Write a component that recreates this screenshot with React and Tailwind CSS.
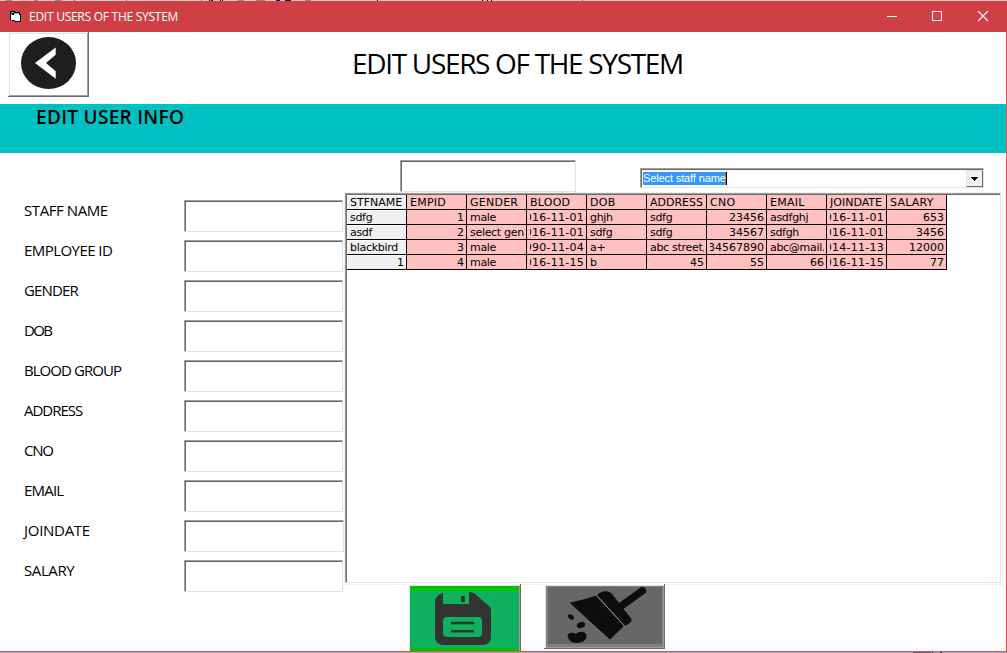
import React from "react";

const SUNKEN =
  "border border-t-[#a0a0a0] border-l-[#a0a0a0] border-r-[#e3e3e3] border-b-[#e3e3e3]";
const SUNKEN_INNER =
  "border-t border-l border-[#696969] bg-white";

const fields = [
  { label: "STAFF NAME", track: "tracking-[-0.42px]" },
  { label: "EMPLOYEE ID", track: "tracking-[-0.55px]" },
  { label: "GENDER", track: "tracking-[-0.85px]" },
  { label: "DOB", track: "tracking-[-1.7px]" },
  { label: "BLOOD GROUP", track: "tracking-[-0.95px]" },
  { label: "ADDRESS", track: "tracking-[-1px]" },
  { label: "CNO", track: "tracking-[-1.3px]" },
  { label: "EMAIL", track: "tracking-[-0.8px]" },
  { label: "JOINDATE", track: "tracking-[-0.28px]", wide: true },
  { label: "SALARY", track: "tracking-[-0.4px]" },
];

const headers = ["STFNAME", "EMPID", "GENDER", "BLOOD", "DOB", "ADDRESS", "CNO", "EMAIL", "JOINDATE", "SALARY"];

const rows = [
  ["sdfg", "1", "male", "2016-11-01", "ghjh", "sdfg", "23456", "asdfghj", "2016-11-01", "653"],
  ["asdf", "2", "select gender", "2016-11-01", "sdfg", "sdfg", "34567", "sdfgh", "2016-11-01", "3456"],
  ["blackbird", "3", "male", "1990-11-04", "a+", "abc street,", "1234567890", "abc@mail.com", "2014-11-13", "12000"],
  ["1", "4", "male", "2016-11-15", "b", "45", "55", "66", "2016-11-15", "77"],
];

const isNumeric = (v) => /^[\d-]+$/.test(v);

const trackFor = (v) => {
  if (/^\d+-/.test(v)) return "tracking-[0.25px]";
  if (/^\d+$/.test(v)) return "tracking-[0px]";
  if (/^[A-Z]+$/.test(v)) return v.length > 6 ? "tracking-[0px]" : "tracking-[0.25px]";
  return "tracking-[-0.3px]";
};

/* Slivers of the window behind: [gap before, width, colour] */
const topSlivers = [
  [6, 6, "#8d8888"], [22, 4, "#8d8888"], [17, 7, "#8d8888"], [12, 1, "#6f6b6b"],
  [51, 1, "#6f6b6b"], [74, 1, "#6f6b6b"], [7, 1, "#000"], [1, 2, "#000"],
  [7, 1, "#000"], [1, 1, "#000"], [15, 6, "#8d8888"], [12, 9, "#8d8888"],
  [11, 4, "#0000c8"], [5, 6, "#300"], [14, 6, "#8d8888"], [66, 1, "#000"],
  [104, 1, "#000"], [4, 1, "#000"], [3, 1, "#000"], [90, 1, "#6f6b6b"],
];
const bottomSlivers = [[913, 18, "#66666a"], [1, 1, "#333"], [7, 2, "#333"]];

function Slivers({ items }) {
  return items.map(([gap, width, color], i) => (
    <span key={i} className="h-px shrink-0" style={{ marginLeft: gap, width, background: color }} />
  ));
}

function FormIcon() {
  return (
    <svg width="13" height="12" viewBox="0 0 13 12" shapeRendering="crispEdges">
      <path d="M0 0h5v1h5v2h1v8H5v-1H2V9H0z" fill="#000" />
      <path d="M1 3h8v1h1v6H5V9H1z" fill="#fff" />
      <path d="M1 1h3v1H1zM4 2h5v1H4z" fill="#19d3dd" />
      <path d="M2 3h2v1H2z" fill="#000" />
      <path d="M11 6h1v1h1v1h-1v1h-1z" fill="#7d6f70" />
    </svg>
  );
}

function TitleBar() {
  return (
    <div className="flex h-[31px] shrink-0 items-center bg-[#d13f46] text-white">
      <div className="ml-[10px]"><FormIcon /></div>
      <span className="ml-[6px] w-[160px] whitespace-nowrap font-['Open_Sans',sans-serif] text-[12px] leading-4 tracking-[-0.26px]">
        EDIT USERS OF THE SYSTEM
      </span>
      <svg className="ml-auto mr-[18px]" width="102" height="11" viewBox="0 0 102 11" fill="none" stroke="#fff">
        <path d="M0 5.5h10" />
        <path d="M45.5 .5h9v9h-9z" />
        <path d="M91 0l10 10M101 0L91 10" strokeWidth="1.1" />
      </svg>
    </div>
  );
}

function Header() {
  return (
    <div className="flex h-[72px] shrink-0 items-start bg-white">
      <button className="ml-2 h-[65px] w-[81px] border-r border-b border-[#696969] pl-px pt-px">
        <span className="flex h-full w-full items-start border border-t-[#e3e3e3] border-l-[#e3e3e3] border-r-[#a0a0a0] border-b-[#a0a0a0] pl-[11px] pt-[3px]">
          <svg width="55" height="52" viewBox="0 0 55 52">
            <ellipse cx="27.5" cy="26" rx="27.5" ry="26" fill="#1e1e1c" />
            <path d="M34.700 10.500v7.200L25 26l9.700 8.200v7.600L14 26z" fill="#fff" />
          </svg>
        </span>
      </button>
      <h1 className="ml-[263px] mt-[12px] whitespace-nowrap font-['Open_Sans',sans-serif] text-[28px] leading-[38px] tracking-[-1.32px] text-black">
        EDIT USERS OF THE SYSTEM
      </h1>
    </div>
  );
}

function StaffForm() {
  return (
    <form className="flex w-[344px] shrink-0 flex-col pt-[47px]">
      {fields.map((f) => (
        <div key={f.label} className="flex h-10 items-start">
          <label className={`w-[184px] pl-6 font-['Open_Sans',sans-serif] text-[15px] leading-5 text-black ${f.track}`}>
            {f.label}
          </label>
          <div className={`h-8 ${f.wide ? "w-[160px]" : "w-[159px]"} ${SUNKEN}`}>
            <div className={`h-full w-full ${SUNKEN_INNER}`} />
          </div>
        </div>
      ))}
    </form>
  );
}

function Cell({ value, grey, right }) {
  return (
    <div className={`h-[15px] w-[60px] border-r border-b border-black ${grey ? "bg-[#f0f0f0]" : "bg-[#ffc0c0]"}`}>
      <div className={`h-full w-full pr-[2px] ${grey ? "border-t border-l border-white pl-[2px]" : "pl-[3px]"}`}>
        <div className={`flex h-full overflow-hidden ${right ? "justify-end" : ""}`}>
          <span className={`shrink-0 whitespace-nowrap ${grey ? "leading-[13px]" : "leading-[15px]"} ${trackFor(value)}`}>
            {value}
          </span>
        </div>
      </div>
    </div>
  );
}

function StaffGrid() {
  return (
    <div className="h-[393px] w-[659px] border border-[#f0f0f0]">
      <div className={`h-[390px] w-[656px] ${SUNKEN}`}>
        <div className={`h-full w-full ${SUNKEN_INNER} font-['DejaVu_Sans',sans-serif] text-[11px] text-black`}>
          <div className="flex">
            {headers.map((h, i) => (
              <Cell key={h} value={h} grey={i === 0} />
            ))}
          </div>
          {rows.map((r, n) => (
            <div className="flex" key={n}>
              {r.map((v, i) => (
                <Cell key={i} value={v} grey={i === 0} right={isNumeric(v)} />
              ))}
            </div>
          ))}
        </div>
      </div>
    </div>
  );
}

function SearchRow() {
  return (
    <div className="flex h-[39px] items-start">
      <div className={`ml-14 mt-[7px] h-8 w-44 ${SUNKEN}`}>
        <div className={`h-full w-full ${SUNKEN_INNER}`} />
      </div>
      <div className={`ml-16 mt-[15px] h-5 w-[344px] ${SUNKEN}`}>
        <div className={`flex h-full w-full items-center pl-px ${SUNKEN_INNER}`}>
          <span className="h-[13px] w-[83px] whitespace-nowrap border-r border-[#cc6600] bg-[#3399ff] font-['Liberation_Sans',sans-serif] text-[11px] leading-[13px] tracking-[-0.12px] text-white">
            Select staff name
          </span>
          <span className="h-[13px] w-px bg-black" />
          <span className="ml-auto flex h-[17px] w-[17px] items-center justify-center border border-t-[#e3e3e3] border-l-[#e3e3e3] border-r-[#696969] border-b-[#696969] bg-[#f0f0f0]">
            <svg width="7" height="4" viewBox="0 0 7 4" shapeRendering="crispEdges">
              <path d="M0 0h7v1H6v1H5v1H4v1H3V3H2V2H1V1H0z" fill="#000" />
            </svg>
          </span>
        </div>
      </div>
    </div>
  );
}

function Actions() {
  return (
    <div className="-mt-px flex h-[67px] items-start">
      <button className="ml-[65px] h-[67px] w-[112px] border-r border-[#696969] bg-white pt-px">
        <span className="flex h-full w-full flex-col border-t border-l border-r border-t-[#e3e3e3] border-l-[#e3e3e3] border-r-[#a0a0a0] bg-[#00c400] pb-[3px] pt-[5px]">
          <svg width="109" height="57" viewBox="0 0 109 57">
            <rect width="109" height="57" fill="#10b15e" />
            <path d="M33 2c-4 1-8 4-8 9v35c0 4 3 8 8 8h40c4 0 8-3 8-8V19c0-2-1-3-2-4L65 3c-1-1-3-2-5-2h-1v12H33z" fill="#333" />
            <rect x="51" y="5" width="4" height="6" fill="#333" />
            <rect x="33" y="26" width="39" height="20" rx="4" fill="#10b15e" />
            <path d="M41 32h23M41 40.200h23" stroke="#333" strokeWidth="2.6" />
          </svg>
        </span>
      </button>
      <button className="ml-[23px] h-[65px] w-[121px] border-r border-b border-[#696969] bg-white pl-px pt-px">
        <span className="block h-full w-full border border-t-[#e3e3e3] border-l-[#e3e3e3] border-r-[#a0a0a0] border-b-[#a0a0a0] bg-[#808080] pl-[2px] pt-px">
          <svg width="114" height="57" viewBox="0 0 114 57">
            <rect width="114" height="57" fill="#676767" />
            <path d="M22.500 16Q37 13 48 9L75.500 39 62 52Q42 34 22.500 16Z" fill="#0d0d0d" stroke="#0d0d0d" strokeWidth="1" strokeLinejoin="round" />
            <path d="M49 8c5-5 12-5 16 0l6 8L92 1c3-3 8 1 5.500 5l-22 16 6.500 8c3 4 2 5-5 9z" fill="#0d0d0d" />
            <path d="M48.500 8.500L76.500 39" stroke="#8a8a8a" strokeWidth="1" />
            <ellipse cx="23" cy="30" rx="3.300" ry="2.300" transform="rotate(35 23 30)" fill="#0d0d0d" />
            <ellipse cx="33" cy="38" rx="4.300" ry="3" transform="rotate(-20 33 38)" fill="#0d0d0d" />
            <path d="M20 47c3-2 6-1 8 0 3-3 9-3 10.500 1 1 5-5 8-10 8-6 0-10-5-8.500-9z" fill="#0d0d0d" />
          </svg>
        </span>
      </button>
    </div>
  );
}

export default function App() {
  return (
    <div className="flex h-[653px] w-[1007px] flex-col overflow-hidden bg-white">
      <div className="flex h-px shrink-0 bg-[#d0cccc]">
        <Slivers items={topSlivers} />
      </div>
      <TitleBar />
      <div className="flex h-[620px] shrink-0 flex-col border-r border-b border-[#d9525c]">
        <Header />
        <div className="h-[49px] shrink-0 bg-[#00c1c2] pl-9">
          <h2 className="whitespace-nowrap font-['Open_Sans',sans-serif] text-[19px] font-semibold leading-[27px] tracking-[0.3px] text-black">
            EDIT USER INFO
          </h2>
        </div>
        <div className="flex h-[498px] min-h-0">
          <StaffForm />
          <div className="flex flex-col">
            <SearchRow />
            <StaffGrid />
            <Actions />
          </div>
        </div>
      </div>
      <div className="flex h-px shrink-0 bg-[#a4a8b0]">
        <Slivers items={bottomSlivers} />
      </div>
    </div>
  );
}
